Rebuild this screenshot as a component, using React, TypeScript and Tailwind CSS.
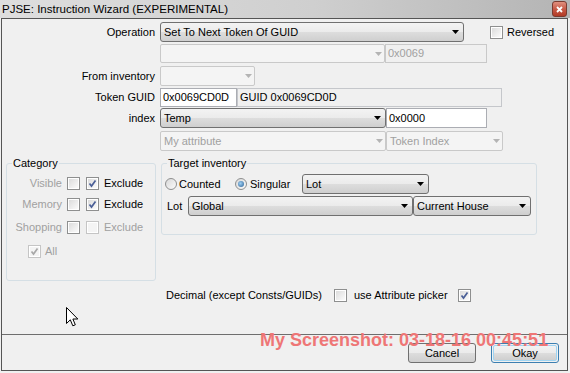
const font = "font-['Liberation_Sans',Arial,sans-serif]";

const Arrow = ({ color = "#000" }: { color?: string }) => (
  <svg width="7" height="4" viewBox="0 0 7 4" className="shrink-0">
    <path d="M0 0h7L3.5 4z" fill={color} />
  </svg>
);

type ComboProps = { className: string; text?: string; disabled?: boolean };

const Combo = ({ className, text = "", disabled }: ComboProps) =>
  disabled ? (
    <div
      className={`${className} flex items-center justify-between pl-[3px] pr-[2px] border border-[#c9c9c9] rounded-[2px] bg-[#f4f4f4] text-[#a0a0a0]`}
    >
      <span>{text}</span>
      <span className="h-full flex items-center pl-[3px] border-l border-transparent">
        <Arrow color="#b4b4b4" />
      </span>
    </div>
  ) : (
    <div
      className={`${className} flex items-center justify-between pl-[3px] pr-[4px] border border-[#707070] rounded-[3px] bg-[linear-gradient(#f3f3f3,#ebebeb_50%,#dddddd_51%,#cfcfcf)] text-black`}
    >
      <span>{text}</span>
      <Arrow />
    </div>
  );

type BoxProps = { className: string; text?: string; tone?: "white" | "readonly" | "disabled" };

const TextBox = ({ className, text = "", tone = "white" }: BoxProps) => {
  const look =
    tone === "white"
      ? "bg-white border-[#abadb3] text-black"
      : tone === "readonly"
        ? "bg-[#f0f0f0] border-[#c5c7cb] text-black"
        : "bg-[#f0f0f0] border-[#c9c9c9] text-[#a0a0a0]";
  return <div className={`${className} ${look} border flex items-center pl-[2px]`}>{text}</div>;
};

const Check = ({ checked, disabled }: { checked?: boolean; disabled?: boolean }) => (
  <span
    className={`w-[13px] h-[13px] shrink-0 border p-[1px] flex bg-white ${disabled ? "border-[#c5c5c5]" : "border-[#8e8f8f]"}`}
  >
    <span
      className={`flex-1 flex items-center justify-center ${disabled ? "bg-[#f4f4f4]" : "bg-[linear-gradient(135deg,#dcdcdc,#fbfbfb)]"}`}
    >
      {checked && (
        <svg width="9" height="9" viewBox="0 0 9 9">
          <path
            d="M1.5 4.5L3.5 7L7.5 1.5"
            fill="none"
            stroke={disabled ? "#a8a8a8" : "#4a5f97"}
            strokeWidth="1.7"
          />
        </svg>
      )}
    </span>
  </span>
);

const Radio = ({ on }: { on?: boolean }) => (
  <span className="w-[12px] h-[12px] shrink-0 rounded-full border border-[#8e8f8f] bg-[linear-gradient(135deg,#d8d8d8,#fbfbfb)] flex items-center justify-center">
    {on && (
      <span className="w-[6px] h-[6px] rounded-full bg-[radial-gradient(circle_at_40%_40%,#9fd0f4,#2a5f93)]" />
    )}
  </span>
);

const Label = ({ children }: { children: string }) => (
  <span className="w-[153px] shrink-0 text-right">{children}</span>
);

const GroupBox = ({
  title,
  className,
  children,
}: {
  title: string;
  className: string;
  children: React.ReactNode;
}) => (
  <div className={`${className} relative shrink-0 border border-[#d5dfe5] rounded-[3px]`}>
    <span className="absolute left-[5px] -top-[7px] px-[1px] leading-[13px] bg-[#f0f0f0]">
      {title}
    </span>
    {children}
  </div>
);

const CatRow = ({
  name,
  exclude,
  disabled,
  className,
}: {
  name: string;
  exclude?: boolean;
  disabled?: boolean;
  className: string;
}) => (
  <div className={`${className} h-[13px] flex items-center`}>
    <span className="w-[55px] text-right text-[#a0a0a0]">{name}</span>
    <span className="ml-[5px]">
      <Check />
    </span>
    <span className="ml-[6px]">
      <Check checked={exclude} disabled={disabled} />
    </span>
    <span className={`ml-[5px] ${disabled ? "text-[#a0a0a0]" : "text-black"}`}>Exclude</span>
  </div>
);

const Cursor = () => (
  <svg width="13" height="20" viewBox="0 0 13 20">
    <path d="M0.5 0.5V16.5L4.3 12.8L6.8 18.8L9.3 17.8L6.9 12H11.8Z" fill="#fff" stroke="#000" />
  </svg>
);

export default function App() {
  return (
    <div className={`w-[570px] h-[373px] bg-[#f0f0f0] text-[11px] leading-[13px] text-black ${font}`}>
      <div className="h-[18px] flex items-center justify-between pl-[2px] pr-[3px] bg-[linear-gradient(90deg,#dedede,#cfcfcf_55%,#b4b4b4)]">
        <span className="text-[11.5px] text-black">PJSE: Instruction Wizard (EXPERIMENTAL)</span>
        <span className="w-[15px] h-[16px] rounded-[3px] border border-[#7a3b30] bg-[linear-gradient(#e0907f,#c75a47_50%,#b23b26)] flex items-center justify-center">
          <svg width="7" height="7" viewBox="0 0 7 7">
            <path d="M1 1L6 6M6 1L1 6" stroke="#fff" strokeWidth="1.8" />
          </svg>
        </span>
      </div>

      <div className="ml-[1px] w-[567px] h-[353px] border border-[#555] bg-[#f0f0f0] relative flex flex-col">
        <div className="mt-[3px] h-[20px] flex items-center">
          <Label>Operation</Label>
          <Combo className="ml-[5px] w-[304px] h-[20px]" text="Set To Next Token Of GUID" />
          <span className="ml-[26px]">
            <Check />
          </span>
          <span className="ml-[4px]">Reversed</span>
        </div>

        <div className="mt-[2px] h-[19px] flex items-center pl-[158px]">
          <Combo className="w-[225px] h-[19px]" disabled />
          <TextBox className="w-[102px] h-[19px]" text="0x0069" tone="disabled" />
        </div>

        <div className="mt-[3px] h-[20px] flex items-center">
          <Label>From inventory</Label>
          <Combo className="ml-[5px] w-[95px] h-[20px]" disabled />
        </div>

        <div className="mt-[2px] h-[19px] flex items-center">
          <Label>Token GUID</Label>
          <TextBox className="ml-[5px] w-[77px] h-[19px]" text="0x0069CD0D" />
          <TextBox className="w-[265px] h-[19px]" text="GUID 0x0069CD0D" tone="readonly" />
        </div>

        <div className="mt-[1px] h-[20px] flex items-center">
          <Label>index</Label>
          <Combo className="ml-[5px] w-[226px] h-[20px]" text="Temp" />
          <TextBox className="w-[101px] h-[20px]" text="0x0000" />
        </div>

        <div className="mt-[3px] h-[20px] flex items-center pl-[158px]">
          <Combo className="w-[226px] h-[20px]" text="My attribute" disabled />
          <Combo className="w-[117px] h-[20px]" text="Token Index" disabled />
        </div>

        <div className="mt-[12px] flex items-start">
          <GroupBox title="Category" className="ml-[4px] w-[150px] h-[118px]">
            <div className="flex flex-col">
              <CatRow name="Visible" exclude className="mt-[13px]" />
              <CatRow name="Memory" exclude className="mt-[8px]" />
              <CatRow name="Shopping" disabled className="mt-[10px]" />
              <div className="mt-[11px] h-[13px] flex items-center pl-[21px]">
                <Check checked disabled />
                <span className="ml-[4px] text-[#a0a0a0]">All</span>
              </div>
            </div>
          </GroupBox>

          <GroupBox title="Target inventory" className="ml-[5px] w-[376px] h-[72px]">
            <div className="mt-[10px] h-[20px] flex items-center pl-[3px]">
              <Radio />
              <span className="ml-[2px] w-[56px]">Counted</span>
              <Radio on />
              <span className="ml-[3px] w-[52px]">Singular</span>
              <Combo className="w-[127px] h-[20px]" text="Lot" />
            </div>
            <div className="mt-[2px] h-[20px] flex items-center pl-[5px]">
              <span className="w-[21px]">Lot</span>
              <Combo className="w-[225px] h-[20px]" text="Global" />
              <Combo className="w-[118px] h-[20px]" text="Current House" />
            </div>
          </GroupBox>
        </div>

        <div className="mt-[8px] h-[13px] flex items-center pl-[164px]">
          <span className="w-[168px]">Decimal (except Consts/GUIDs)</span>
          <Check />
          <span className="ml-[7px] w-[104px]">use Attribute picker</span>
          <Check checked />
        </div>

        <div className="mt-[32px] h-[1px] bg-[#6e6e6e]" />

        <div className="mt-[8px] flex justify-end gap-[15px] pr-[8px]">
          <button className="w-[68px] h-[20px] rounded-[3px] border border-[#707070] bg-[linear-gradient(#f2f2f2,#ebebeb_50%,#dddddd_51%,#cfcfcf)] text-[11px] leading-[13px]">
            Cancel
          </button>
          <button className="w-[68px] h-[20px] rounded-[3px] border border-[#3c7fb1] p-[1px] flex">
            <span className="flex-1 rounded-[2px] border border-[#9fd4f2] bg-[linear-gradient(#f2f2f2,#ebebeb_50%,#dddddd_51%,#cfcfcf)] flex items-center justify-center text-[11px] leading-[13px]">
              Okay
            </span>
          </button>
        </div>

        <span className="absolute left-[258px] top-[312px] text-[18px] leading-[18px] font-bold text-[#ee7676] font-['Liberation_Sans',Arial,sans-serif] whitespace-nowrap">
          My Screenshot: 03-18-16 00:45:51
        </span>

        <span className="absolute left-[64px] top-[288px]">
          <Cursor />
        </span>
      </div>
    </div>
  );
}
